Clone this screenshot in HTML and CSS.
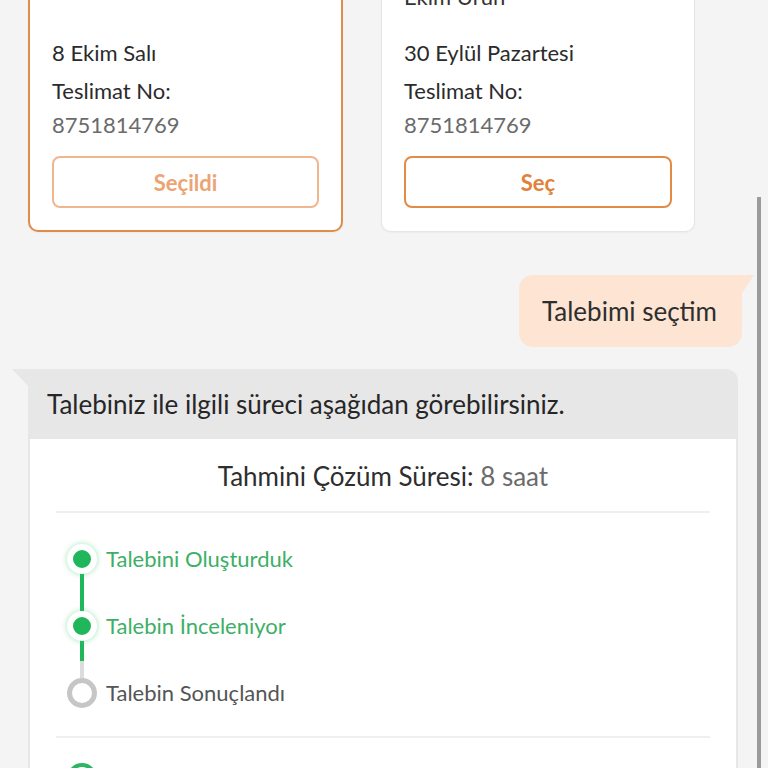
FILE: index.html
```html
<!DOCTYPE html>
<html lang="tr">
<head>
<meta charset="utf-8">
<title>Talep</title>
<link rel="stylesheet" href="styles.css">
</head>
<body>
<div class="chat">
  <div class="cards">
    <div class="card card-selected">
      <div class="card-title">Ekim Siparişi</div>
      <div class="card-details">
        <div class="date">8 Ekim Salı</div>
        <div class="label">Teslimat No:</div>
        <div class="num">8751814769</div>
        <div class="btn btn-selected">Seçildi</div>
      </div>
    </div>
    <div class="card">
      <div class="card-title">Eylül Siparişi<br>Ekim Ürün</div>
      <div class="card-details">
        <div class="date">30 Eylül Pazartesi</div>
        <div class="label">Teslimat No:</div>
        <div class="num">8751814769</div>
        <div class="btn">Seç</div>
      </div>
    </div>
  </div>

  <div class="row-right">
    <div class="user-bubble">Talebimi seçtim</div>
  </div>

  <div class="bot-bubble">
    <div class="bot-head">Talebiniz ile ilgili süreci aşağıdan görebilirsiniz.</div>
    <div class="bot-body">
      <div class="eta">Tahmini Çözüm Süresi: <span class="eta-val">8 saat</span></div>
      <div class="timeline">
        <div class="step done line-green">
          <span class="dot"></span><span class="step-text">Talebini Oluşturduk</span>
        </div>
        <div class="step done line-mixed">
          <span class="dot"></span><span class="step-text">Talebin İnceleniyor</span>
        </div>
        <div class="step">
          <span class="dot"></span><span class="step-text">Talebin Sonuçlandı</span>
        </div>
      </div>
      <div class="note">
        <span class="ring"></span><span class="note-text">8 Ekim tarihinde talebinizi aldık, talebiniz inceleniyor.</span>
      </div>
    </div>
  </div>
</div>
<div class="scrollbar"></div>
</body>
</html>
```
FILE: styles.css
```css
html, body {
  margin: 0;
  padding: 0;
  background: #f4f4f4;
  font-family: Lato, "Open Sans", sans-serif;
  color: #333;
  overflow: hidden;
  height: 768px;
}
* { box-sizing: border-box; }

.chat {
  display: flex;
  flex-direction: column;
}

.cards {
  display: flex;
  gap: 38px;
  padding-left: 28px;
  margin-top: -69px;
}
.card {
  width: 314px;
  background: #fff;
  border: 1px solid #e6e6e6;
  border-radius: 10px;
  padding: 20px 22px 23px;
  display: flex;
  flex-direction: column;
  box-shadow: 0 1px 2px rgba(0,0,0,0.04);
}
.card-selected {
  width: 315px;
  border: 2px solid #e08c4a;
  padding: 19px 22px 22px;
}
.card-title {
  font-size: 22px;
  line-height: 30px;
  color: #333;
  margin-bottom: 24px;
}
.card-details {
  margin-top: auto;
  display: flex;
  flex-direction: column;
}
.date {
  font-size: 22px;
  line-height: 34px;
  color: #2b2b2b;
}
.label {
  font-size: 22px;
  line-height: 34px;
  margin-top: 4px;
  color: #2b2b2b;
}
.num {
  font-size: 22px;
  line-height: 34px;
  color: #6b6b6b;
}
.btn {
  margin-top: 14px;
  height: 52px;
  border: 2px solid #e38a45;
  border-radius: 8px;
  display: flex;
  align-items: center;
  justify-content: center;
  font-size: 22px;
  font-weight: 700;
  color: #e0823c;
}
.btn-selected {
  border-color: #f0b68c;
  color: #eca474;
}

.row-right {
  display: flex;
  justify-content: flex-end;
  padding-right: 26px;
  margin-top: 43px;
}
.user-bubble {
  position: relative;
  background: #fde4d3;
  height: 72px;
  padding: 0 25px 0 23px;
  display: flex;
  align-items: center;
  font-size: 26px;
  color: #2e2e2e;
  border-radius: 14px 0 14px 14px;
}
.user-bubble::after {
  content: "";
  position: absolute;
  top: 0;
  right: -12px;
  border-top: 18px solid #fde4d3;
  border-right: 12px solid transparent;
}

.bot-bubble {
  position: relative;
  margin: 22px 30px 0 28px;
  background: #e7e7e7;
  border-radius: 0 12px 0 0;
  padding: 0 2px;
}
.bot-bubble::before {
  content: "";
  position: absolute;
  top: 0;
  left: -16px;
  border-top: 17px solid #e7e7e7;
  border-left: 16px solid transparent;
}
.bot-head {
  height: 70px;
  display: flex;
  align-items: center;
  padding-left: 17px;
  font-size: 26px;
  color: #262626;
}
.bot-body {
  background: #fff;
  padding: 0 26px;
  height: 400px;
}
.eta {
  text-align: center;
  font-size: 26px;
  line-height: 34px;
  padding: 20px 0 18px;
  border-bottom: 2px solid #efefef;
  color: #2e2e2e;
}
.eta-val { color: #6b6b6b; }

.timeline {
  padding: 12px 0 10px;
  border-bottom: 2px solid #efefef;
}
.step {
  position: relative;
  height: 67px;
  display: flex;
  align-items: center;
  padding-left: 11px;
  gap: 9px;
}
.dot {
  width: 30px;
  height: 30px;
  border-radius: 50%;
  border: 5px solid #c6c6c6;
  background: #fff;
  flex: none;
  position: relative;
  z-index: 1;
}
.step.done .dot {
  border: 6px solid #fff;
  background: #1fb75a;
  box-shadow: 0 0 5px 1px rgba(60, 200, 110, 0.35);
}
.step-text {
  font-size: 22px;
  color: #555;
}
.step.done .step-text { color: #3daf66; }

.step.line-green::after,
.step.line-mixed::after {
  content: "";
  position: absolute;
  left: 24px;
  top: 47px;
  width: 4px;
  height: 40px;
  background: #1fb75a;
}
.step.line-mixed::after {
  background: linear-gradient(#1fb75a 0 55%, #dcdcdc 55% 100%);
}

.note {
  display: flex;
  align-items: flex-start;
  gap: 9px;
  padding: 25px 0 0 11px;
}
.ring {
  width: 30px;
  height: 30px;
  border-radius: 50%;
  border: 4px solid #2fb463;
  flex: none;
}
.note-text {
  font-size: 22px;
  line-height: 30px;
  color: #333;
}

.scrollbar {
  position: fixed;
  right: 7px;
  top: 197px;
  bottom: 0;
  width: 4px;
  background: #9b9b9b;
}
```
